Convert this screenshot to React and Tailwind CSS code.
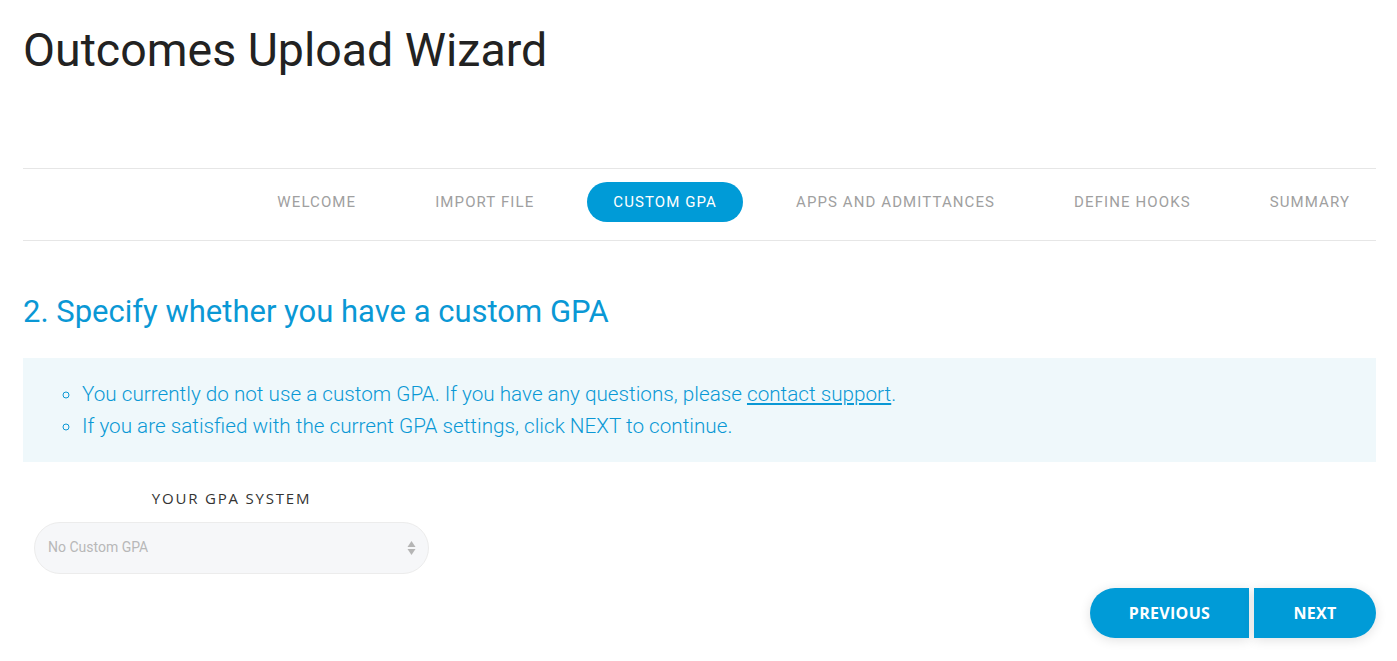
import React from 'react';

const steps = ['Welcome', 'Import File', 'Custom GPA', 'Apps and Admittances', 'Define Hooks', 'Summary'];

function ArrowsIcon() {
  return (
    <svg width="9" height="16" viewBox="0 0 9 16" className="text-[#b5b5b5]">
      <path d="M4.5 1 L8.5 7 L0.5 7 Z" fill="currentColor" />
      <path d="M4.5 15 L8.5 9 L0.5 9 Z" fill="currentColor" />
    </svg>
  );
}

export default function App() {
  return (
    <div className="min-h-screen bg-white pr-[21px] pl-[23px] font-['Roboto',sans-serif] text-[#222]">
      {/* Title */}
      <h1 className="pt-[20px] text-[46.5px] leading-[60px] font-normal text-[#222]">Outcomes Upload Wizard</h1>

      {/* Steps */}
      <div className="mt-[88px] flex h-[73px] items-start justify-end gap-[27px] border-y border-[#e6e6e6] pt-[13px]">
        {steps.map((step) => (
          <div
            key={step}
            className={
              step === 'Custom GPA'
                ? 'flex h-[40px] items-center rounded-full bg-[#009bd7] px-[26px] text-[15px] tracking-[1.1px] text-white uppercase'
                : 'flex h-[40px] items-center px-[26px] text-[15px] tracking-[1.1px] text-[#a0a0a0] uppercase'
            }
          >
            {step}
          </div>
        ))}
      </div>

      {/* Section heading */}
      <h2 className="mt-[51px] text-[31px] leading-[40px] font-normal text-[#0a98d5]">
        2. Specify whether you have a custom GPA
      </h2>

      {/* Info box */}
      <div className="mt-[26px] bg-[#eff8fb] py-5 pl-[37px]">
        <ul className="list-[circle] pl-[22px] text-[20.7px] leading-8 font-light text-[#0a98d5]">
          <li>
            You currently do not use a custom GPA. If you have any questions, please{' '}
            <a href="#" className="underline">contact support</a>.
          </li>
          <li>If you are satisfied with the current GPA settings, click NEXT to continue.</li>
        </ul>
      </div>

      {/* GPA system select */}
      <div className="mt-[25px] ml-[11px] w-[395px]">
        <div className="text-center font-['Open_Sans',sans-serif] text-[15px] tracking-[1.8px] text-[#333]">YOUR GPA SYSTEM</div>
        <div className="mt-[12px] flex h-[52px] items-center justify-between rounded-full border border-[#ececec] bg-[#f6f7f9] pr-[12px] pl-[13px]">
          <span className="text-[14px] text-[#b8b8b8]">No Custom GPA</span>
          <ArrowsIcon />
        </div>
      </div>

      {/* Navigation buttons */}
      <div className="mt-[14px] flex justify-end gap-[5px]">
        <button className="h-[50px] w-[159px] rounded-l-full bg-[#009bd7] font-['Open_Sans',sans-serif] text-[16px] font-bold tracking-[0.3px] text-white shadow-[0_2px_12px_rgba(0,0,0,0.12)]">
          PREVIOUS
        </button>
        <button className="h-[50px] w-[122px] rounded-r-full bg-[#009bd7] font-['Open_Sans',sans-serif] text-[16px] font-bold tracking-[0.3px] text-white shadow-[0_2px_12px_rgba(0,0,0,0.12)]">
          NEXT
        </button>
      </div>
    </div>
  );
}
